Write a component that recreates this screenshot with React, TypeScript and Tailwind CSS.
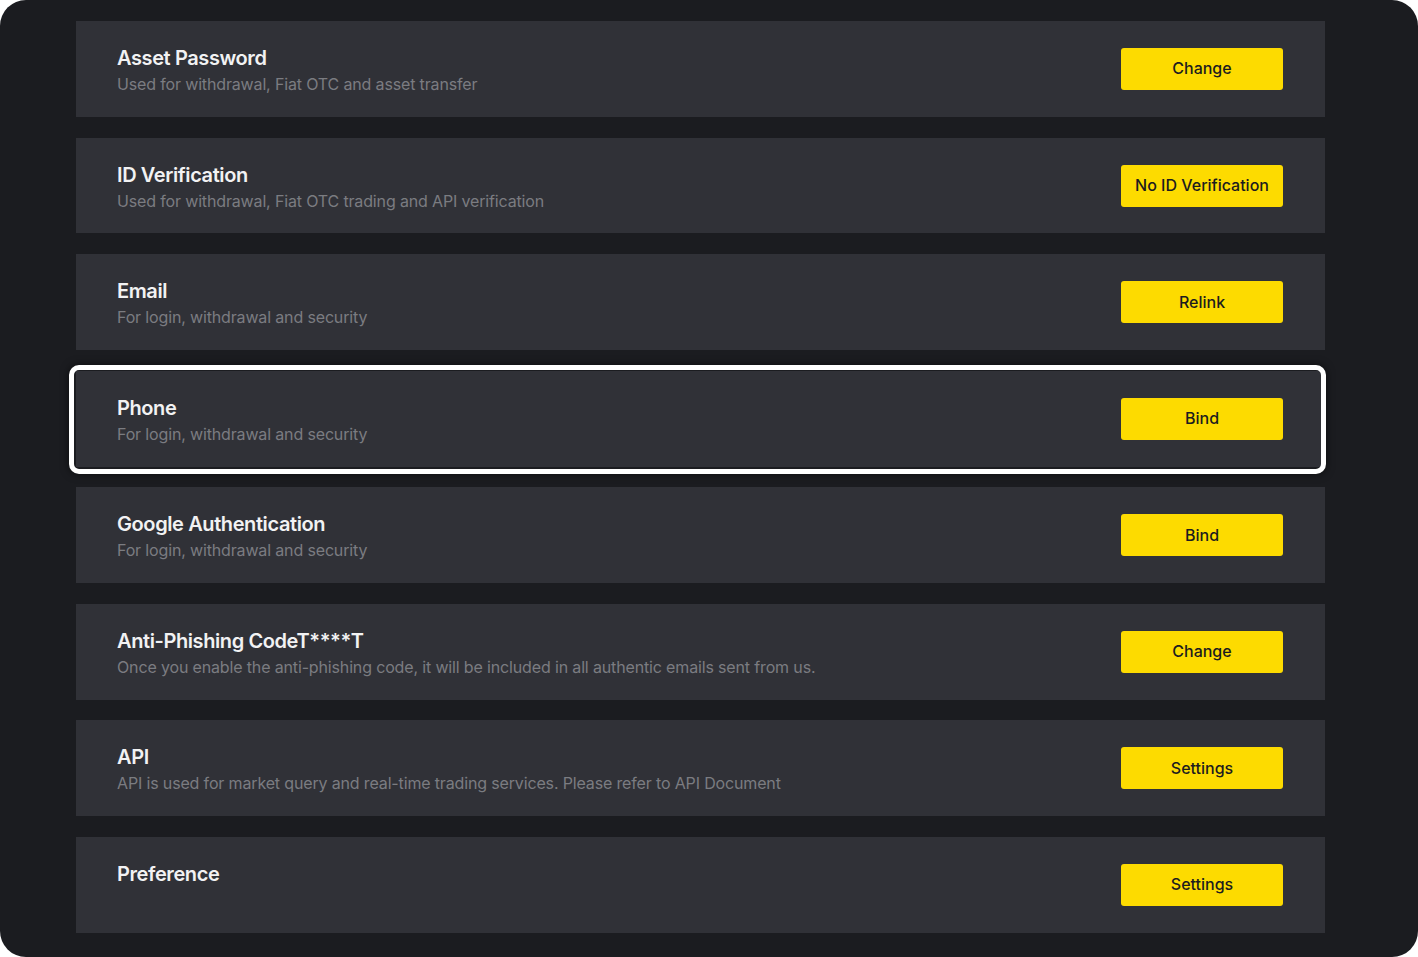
import React from "react"

interface Item {
  title: string
  desc?: string
  action: string
  active?: boolean
}

const items: Item[] = [
  { title: "Asset Password", desc: "Used for withdrawal, Fiat OTC and asset transfer", action: "Change" },
  { title: "ID Verification", desc: "Used for withdrawal, Fiat OTC trading and API verification", action: "No ID Verification" },
  { title: "Email", desc: "For login, withdrawal and security", action: "Relink" },
  { title: "Phone", desc: "For login, withdrawal and security", action: "Bind", active: true },
  { title: "Google Authentication", desc: "For login, withdrawal and security", action: "Bind" },
  {
    title: "Anti-Phishing CodeT****T",
    desc: "Once you enable the anti-phishing code, it will be included in all authentic emails sent from us.",
    action: "Change",
  },
  {
    title: "API",
    desc: "API is used for market query and real-time trading services. Please refer to API Document",
    action: "Settings",
  },
  { title: "Preference", action: "Settings" },
]

const SecurityRow: React.FC<{ item: Item }> = ({ item }) => {
  return (
    <div className="relative h-[96px] bg-[#303137] flex justify-between pl-[41px] pr-[42px]">
      {item.active && (
        <div className="absolute -left-[7px] -top-[6px] -right-[1px] -bottom-[7px] rounded-[10px] border-[5px] border-white shadow-[0_0_8px_rgba(0,0,0,0.6)] pointer-events-none" />
      )}
      <div className="pt-[25px]">
        <div className="text-[20px] leading-[24px] font-semibold text-[#f2f2f3] tracking-[-0.4px]">{item.title}</div>
        {item.desc && (
          <div className="mt-[2px] text-[16px] leading-[24px] text-[#7b7c81] tracking-[-0.15px]">{item.desc}</div>
        )}
      </div>
      <button className="self-center w-[162px] h-[42px] rounded-[3px] bg-[#fddb00] text-[16px] font-medium text-[#1c1c1f] pb-px">
        {item.action}
      </button>
    </div>
  )
}

export default function App() {
  return (
    <div className="w-[1418px] h-[957px] bg-white" style={{ fontFamily: "Inter, 'Noto Sans', sans-serif" }}>
      <div className="h-full rounded-[26px] bg-[#1b1c20] pl-[76px] pr-[93px] pt-[21px] pb-[24px] flex flex-col gap-[20.7px] overflow-hidden">
        {items.map((it, i) => (
          <SecurityRow key={i} item={it} />
        ))}
      </div>
    </div>
  )
}
